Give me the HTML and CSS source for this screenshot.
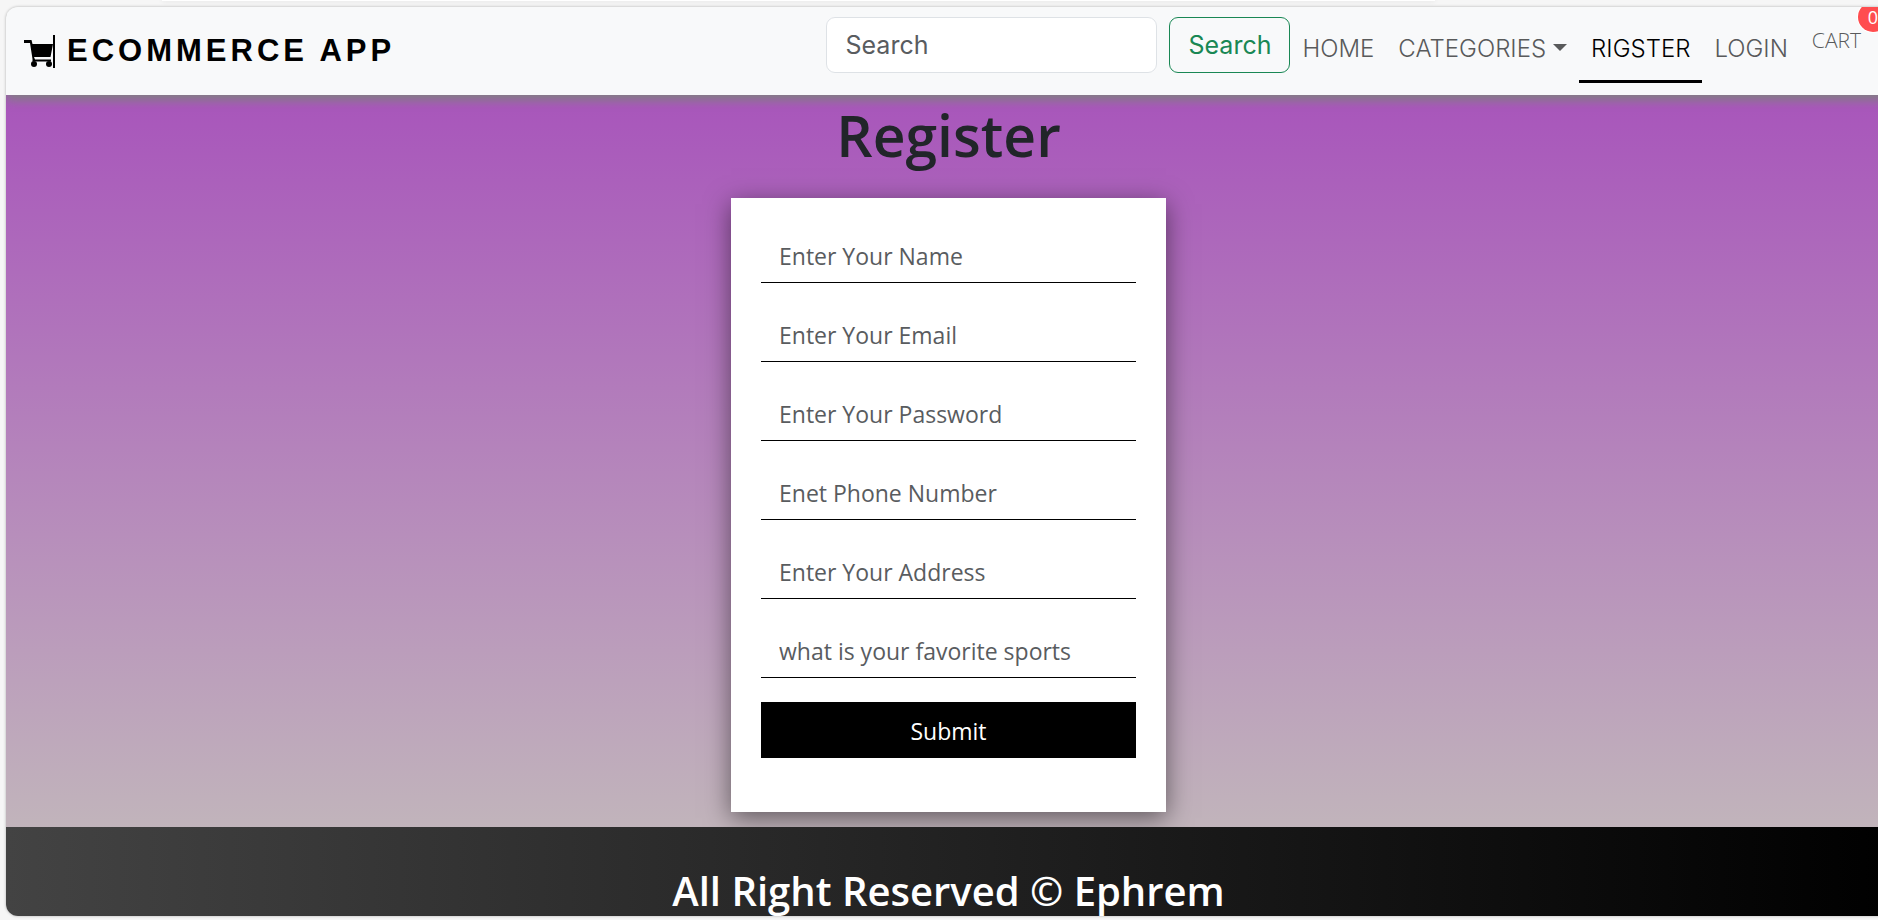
FILE: index.html
```html
<!DOCTYPE html>
<html lang="en">
<head>
<meta charset="utf-8">
<meta name="viewport" content="width=device-width, initial-scale=1">
<title>Register - Ecommerce App</title>
<link rel="stylesheet" href="styles.css">
</head>
<body>
<div class="tab-edge"></div>
<div class="frame">
  <header class="navbar">
    <a class="brand" href="#">
      <svg class="brand-icon" viewBox="0 0 31 33" aria-hidden="true">
        <path d="M0 5h7.500L8.500 9H29L26.500 22H10L11 24.500H27V26.500H8.500V24L6 8H0z"/>
        <circle cx="10" cy="29" r="3"/>
        <circle cx="25" cy="29" r="3"/>
        <path d="M29 0h2v33h-2z"/>
      </svg>
      <span>ECOMMERCE APP</span>
    </a>
    <form class="search" role="search">
      <input class="search-input" type="search" placeholder="Search" aria-label="Search">
      <button class="search-button" type="submit">Search</button>
    </form>
    <nav class="links">
      <a class="link" href="#">HOME</a>
      <a class="link link-menu" href="#">CATEGORIES</a>
      <a class="link link-active" href="#">RIGSTER</a>
      <a class="link" href="#">LOGIN</a>
      <a class="cart" href="#">CART<span class="badge">0</span></a>
    </nav>
  </header>
  <main class="main">
    <h1 class="title">Register</h1>
    <form class="card">
      <input class="field" type="text" placeholder="Enter Your Name" aria-label="Name">
      <input class="field" type="email" placeholder="Enter Your Email" aria-label="Email">
      <input class="field" type="password" placeholder="Enter Your Password" aria-label="Password">
      <input class="field" type="text" placeholder="Enet Phone Number" aria-label="Phone number">
      <input class="field" type="text" placeholder="Enter Your Address" aria-label="Address">
      <input class="field" type="text" placeholder="what is your favorite sports" aria-label="Favorite sports">
      <button class="submit" type="submit">Submit</button>
    </form>
  </main>
  <footer class="footer">
    <h2 class="footer-text">All Right Reserved © Ephrem</h2>
  </footer>
</div>
</body>
</html>
```
FILE: styles.css
```css
* {
  box-sizing: border-box;
}

body {
  display: flex;
  flex-direction: column;
  height: 100vh;
  margin: 0;
  padding: 0 0 4px 6px;
  overflow: hidden;
  background: #f6f6f6;
  color: #212529;
  font-family: "Open Sans", "Noto Sans", sans-serif;
  font-size: 23px;
  line-height: 36px;
}

input,
button {
  margin: 0;
  font: inherit;
}

.tab-edge {
  flex: none;
  width: 68%;
  height: 1px;
  margin: 0 0 6px 156px;
  background: #fff;
  box-shadow: 0 0 5px rgba(0, 0, 0, 0.2);
}

.frame {
  display: flex;
  flex: 1;
  flex-direction: column;
  width: calc(100% + 13px);
  min-height: 0;
  overflow: hidden;
  border-radius: 12px;
  box-shadow: 0 0 3px rgba(0, 0, 0, 0.3);
}

.navbar {
  position: relative;
  display: flex;
  flex: none;
  align-items: flex-start;
  padding: 10px 30px 12px 18px;
  background: #f8f9fa;
  box-shadow: 0 5px 10px #808080;
  font-family: Inter, sans-serif;
}

.brand {
  display: flex;
  align-items: center;
  gap: 12px;
  margin: 16px auto 0 0;
  color: #000;
  font-family: "Liberation Sans", Arial, sans-serif;
  font-size: 31px;
  font-weight: 700;
  letter-spacing: 4px;
  text-decoration: none;
}

.brand-icon {
  width: 31px;
  height: 33px;
}

.search {
  display: flex;
  gap: 12px;
  font-size: 25px;
}

.search-input {
  width: 331px;
  height: 56px;
  padding: 9px 18px;
  border: 1px solid #dee2e6;
  border-radius: 9px;
  background: #fff;
  color: #212529;
}

.search-input::placeholder,
.field::placeholder {
  color: #595c5f;
  opacity: 1;
}

.search-button {
  height: 56px;
  padding: 0 18px;
  border: 1px solid #198754;
  border-radius: 9px;
  background: transparent;
  color: #198754;
}

.links {
  display: flex;
  align-items: flex-start;
}

.link {
  padding: 14px 12px 13px;
  border-bottom: 3px solid transparent;
  color: #595a5b;
  font-size: 24px;
  font-weight: 300;
  text-decoration: none;
}

.link-menu::after {
  display: inline-block;
  margin-left: 7px;
  border: 7px solid transparent;
  border-top-color: currentColor;
  border-bottom: 0;
  content: "";
  vertical-align: 6px;
}

.link-active {
  border-bottom-color: #000;
  color: #000;
}

.cart {
  position: relative;
  margin: 5px 0 0 12px;
  color: #595a5b;
  font-family: "Open Sans", sans-serif;
  font-size: 21px;
  font-weight: 300;
  text-decoration: none;
}

.badge {
  position: absolute;
  top: -20px;
  right: -27px;
  width: 30px;
  height: 30px;
  border-radius: 15px;
  background: #ff4d4f;
  box-shadow: 0 0 0 1px #fff;
  color: #fff;
  font-size: 18px;
  font-weight: 400;
  line-height: 30px;
  text-align: center;
}

.main {
  display: flex;
  flex: none;
  flex-direction: column;
  align-items: center;
  padding: 4px 0 15px;
  background: linear-gradient(#a855bb, #c1b4bb);
}

.title {
  margin: 0 0 27px;
  font-size: 57px;
  font-weight: 600;
  line-height: 72px;
}

.card {
  display: flex;
  flex-direction: column;
  gap: 24px;
  width: 435px;
  padding: 30px 30px 54px;
  background: #fff;
  box-shadow: 0 6px 24px rgba(0, 0, 0, 0.5);
}

.field {
  height: 55px;
  padding: 10px 18px 8px;
  border: 0;
  border-bottom: 1px solid #000;
  background: #fff;
  color: #212529;
}

.submit {
  height: 56px;
  padding: 2px 0 0;
  border: 0;
  background: #000;
  color: #fff;
}

.footer {
  flex: 1 0 auto;
  padding: 34px 24px;
  background: linear-gradient(to right, #434343, #000);
  color: #fff;
}

.footer-text {
  margin: 0;
  font-size: 40px;
  font-weight: 600;
  line-height: 60px;
  text-align: center;
}
```
